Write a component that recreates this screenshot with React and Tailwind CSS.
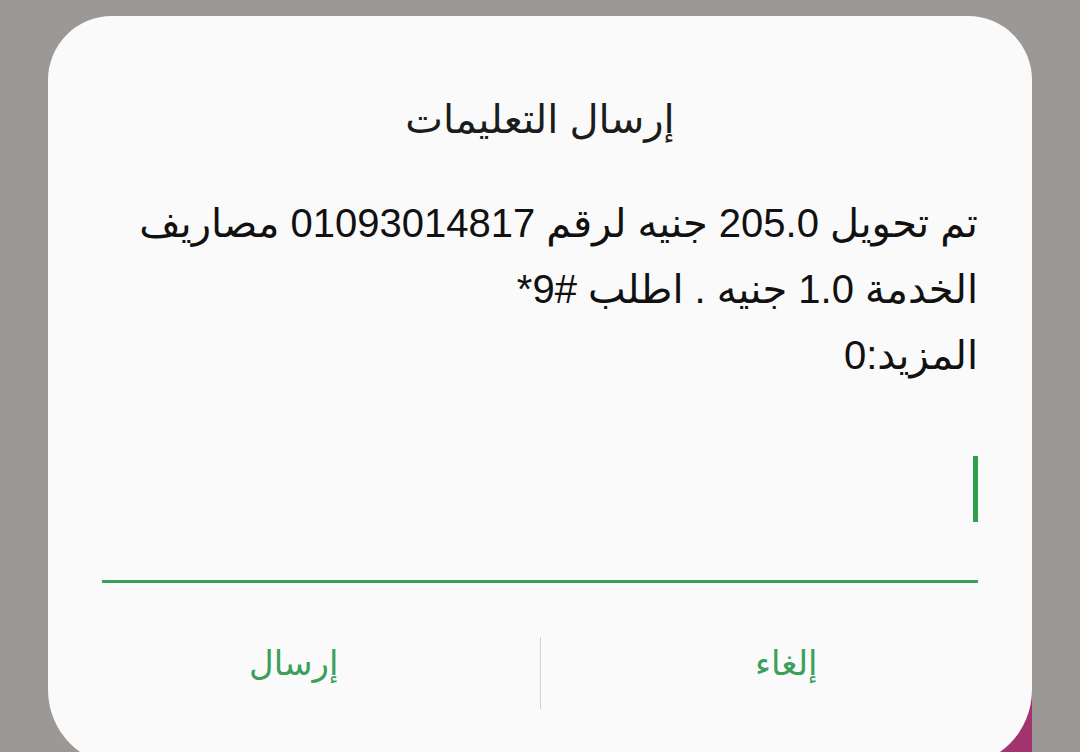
export default function App() {
  const font = { fontFamily: '"Liberation Sans", "DejaVu Sans", sans-serif' };
  return (
    <div className="relative w-full h-[752px] overflow-hidden bg-[#9b9895] px-[48px] pt-[16px]" style={font}>
      {/* purple card peeking behind the dialog */}
      <div className="absolute right-[48px] bottom-0 w-[80px] h-[70px] bg-[#a2336f]" />

      <div dir="rtl" className="relative h-[750px] bg-[#fafafa] rounded-t-[64px] rounded-b-[76px] flex flex-col">
        <h1 className="pt-[78px] text-center text-[40px] leading-[50px] text-[#1c1c1c] font-normal">
          إرسال التعليمات
        </h1>

        <div className="px-[54px] mt-[46px] text-[40px] leading-[66px] text-[#111]">
          <p className="whitespace-nowrap">تم تحويل 205.0 جنيه لرقم 01093014817 مصاريف</p>
          <p className="whitespace-nowrap">
            الخدمة 1.0 جنيه . اطلب <span dir="ltr">*9#</span>
          </p>
          <p className="whitespace-nowrap">المزيد:0</p>
        </div>

        <div className="px-[54px] mt-[68px]">
          <div className="h-[66px] flex items-center">
            <span className="block w-[5px] h-[66px] bg-[#2e9e4f]" />
          </div>
          <div className="mt-[58px] h-[3px] bg-[#3a9f5a]" />
        </div>

        <div className="flex items-center mt-[54px] h-[72px]">
          <button className="flex-1 pb-[20px] text-center text-[34px] text-[#3aa05a] leading-none">إلغاء</button>
          <div className="w-px h-[72px] bg-[#d2d2d2]" />
          <button className="flex-1 pb-[20px] text-center text-[34px] text-[#3aa05a] leading-none">إرسال</button>
        </div>
      </div>
    </div>
  );
}
